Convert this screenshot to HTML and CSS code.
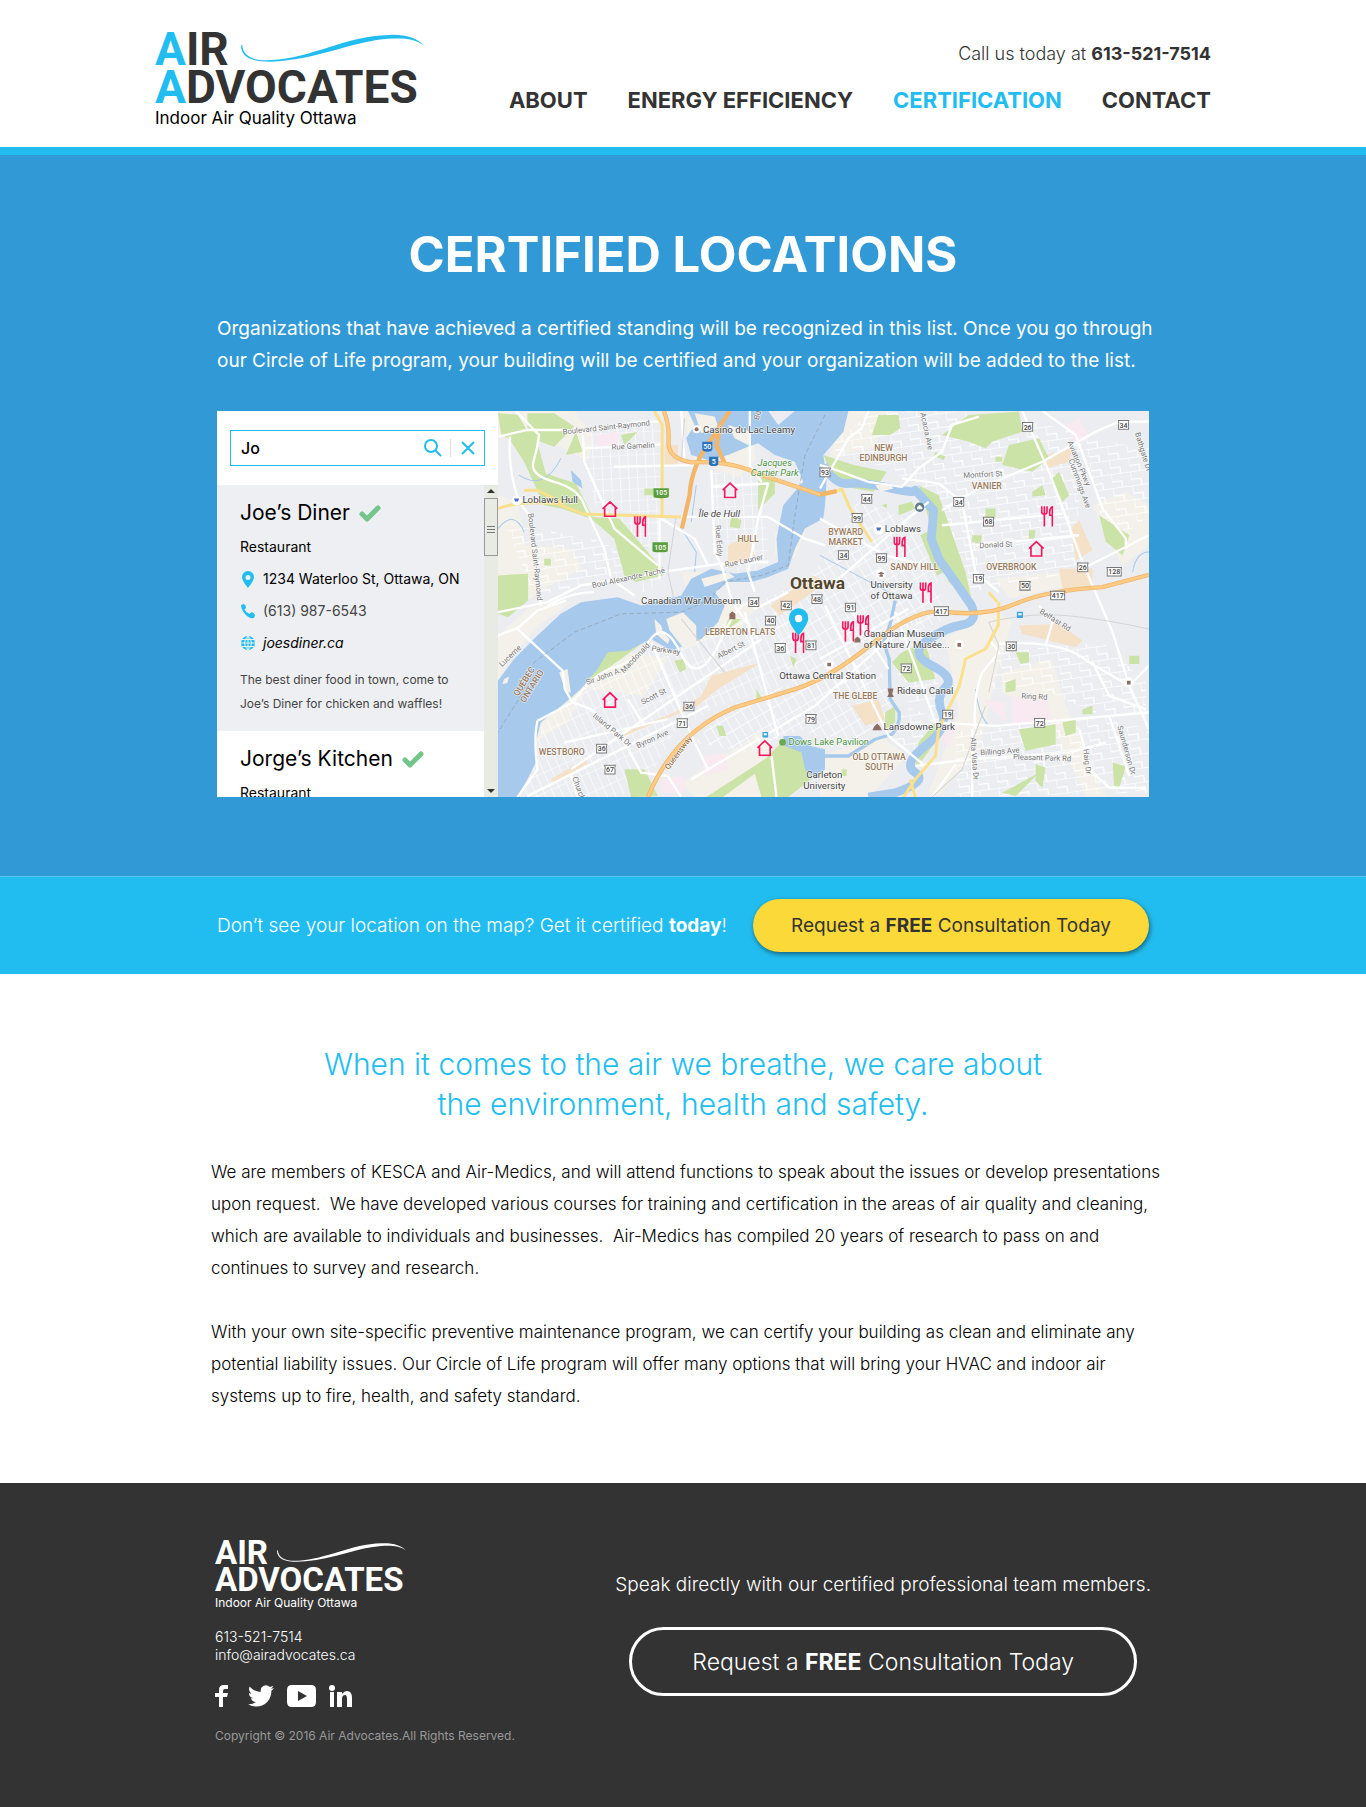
FILE: index.html
```html
<!DOCTYPE html>
<html lang="en">
<head>
<meta charset="utf-8">
<meta name="viewport" content="width=device-width, initial-scale=1">
<title>Certified Locations | Air Advocates</title>
<link rel="stylesheet" href="styles.css">
</head>
<body>
<svg class="sprite" aria-hidden="true">
  <symbol id="swoosh" viewBox="0 0 172 30" preserveAspectRatio="none"><path d="M1 12C2 26 14 29 28 28C66 26 98 3 138 2C152 1 165 5 171 13C163 6 152 5 138 6C108 8 76 25 38 29C18 31 0 29 0 13Z"/></symbol>
  <symbol id="check" viewBox="0 0 22 17"><path d="M3 9l5 5L19 3" fill="none" stroke="#74c58b" stroke-width="5" stroke-linecap="round" stroke-linejoin="round"/></symbol>
  <symbol id="house" viewBox="0 0 48 50"><path d="M2 25L24 4l22 21M8 20v27h32V20" fill="none" stroke="#f3195f" stroke-width="5"/></symbol>
  <symbol id="cutlery" viewBox="0 0 38 64"><path d="M3 1v16q0 8 8 8t8-8V1M11 1v61M35 62V3q-8 3-8 15v10h8" fill="none" stroke="#f3195f" stroke-width="5"/></symbol>
  <symbol id="shield" viewBox="0 0 36 32"><path d="M2 3h32q-3 7-1 14v12H3V17Q5 10 2 3z" fill="#fff" stroke="#777" stroke-width="3"/></symbol>
  <symbol id="shield-wide" viewBox="0 0 48 32"><path d="M2 3h44q-3 7-1 14v12H3V17Q5 10 2 3z" fill="#fff" stroke="#777" stroke-width="3"/></symbol>
</svg>

<header class="site-header">
  <div class="header-inner">
    <a class="logo" href="#">
      <span class="logo-row"><span><span class="accent">A</span>IR</span><svg class="swoosh" aria-hidden="true"><use href="#swoosh"/></svg></span>
      <span class="logo-row"><span><span class="accent">A</span>DVOCATES</span></span>
      <span class="tagline">Indoor Air Quality Ottawa</span>
    </a>
    <div class="header-right">
      <p class="phone">Call us today at <strong>613-521-7514</strong></p>
      <nav class="main-nav" aria-label="Main">
        <a href="#">ABOUT</a>
        <a href="#">ENERGY EFFICIENCY</a>
        <a href="#" class="current" aria-current="page">CERTIFICATION</a>
        <a href="#">CONTACT</a>
      </nav>
    </div>
  </div>
</header>

<main>
<section class="locations">
  <div class="container">
    <h1>CERTIFIED LOCATIONS</h1>
    <p class="intro">Organizations that have achieved a certified standing will be recognized in this list. Once you go through<br>our Circle of Life program, your building will be certified and your organization will be added to the list.</p>

    <div class="finder">
      <div class="sidebar">
        <form class="search" role="search">
          <input type="text" value="Jo" aria-label="Search locations">
          <button type="button" aria-label="Search"><svg width="18" height="18" viewBox="0 0 18 18"><circle cx="7" cy="7" r="6"/><path d="M11 11l6 6"/></svg></button>
          <button type="button" class="clear" aria-label="Clear"><svg width="14" height="14" viewBox="0 0 14 14"><path d="M1 1l12 12M13 1L1 13"/></svg></button>
        </form>
        <div class="results">
          <div class="result-list">
            <article class="result selected">
              <h2>Joe’s Diner <svg class="check" aria-label="Certified"><use href="#check"/></svg></h2>
              <p class="row">Restaurant</p>
              <p class="row"><svg class="row-icon" viewBox="0 0 16 18"><path d="M8 1a6 6 0 0 0-6 6c0 4 6 11 6 11s6-7 6-11a6 6 0 0 0-6-6zm0 4a2 2 0 1 1 0 5 2 2 0 0 1 0-5z" fill-rule="evenodd"/></svg>1234 Waterloo St, Ottawa, ON</p>
              <p class="row muted"><svg class="row-icon" viewBox="0 0 16 18"><path d="M1 3l3-1q2 1 2 4L4.500 7.500q1.500 3 5 4.500l2-2q3 1 3.500 3l-1 3q-5 1-9-4T1 3z"/></svg>(613) 987-6543</p>
              <p class="row"><svg class="row-icon" viewBox="0 0 16 18"><circle cx="8" cy="9" r="7"/><path d="M1 9h14M2 5.500h12M2 12.500h12M8 2v14M8 2q-7 7 0 14M8 2q7 7 0 14" fill="none" stroke="#edeff2" stroke-width="1"/></svg><a href="#">joesdiner.ca</a></p>
              <p class="blurb">The best diner food in town, come to<br>Joe’s Diner for chicken and waffles!</p>
            </article>
            <article class="result">
              <h2>Jorge’s Kitchen <svg class="check" aria-label="Certified"><use href="#check"/></svg></h2>
              <p class="row">Restaurant</p>
            </article>
          </div>
          <div class="scrollbar" aria-hidden="true">
            <span class="arrow up"></span>
            <span class="thumb"></span>
            <span class="arrow down"></span>
          </div>
        </div>
      </div>

      <svg class="map" viewBox="12 18 1947 1155" preserveAspectRatio="xMidYMid slice" role="img" aria-label="Map of certified locations in Ottawa">
        <defs>
          <pattern id="grid" width="26" height="34" patternUnits="userSpaceOnUse" patternTransform="rotate(-3)"><path d="M0 0H26M0 0V34" stroke="#fff" stroke-width="3.500"/></pattern>
          <pattern id="grid-tilt" width="26" height="40" patternUnits="userSpaceOnUse" patternTransform="rotate(-30)"><path d="M0 0H26M0 0V40" stroke="#fff" stroke-width="4"/></pattern>
          <pattern id="grid-west" width="24" height="56" patternUnits="userSpaceOnUse" patternTransform="rotate(-24)"><path d="M0 0H24M0 0V56" stroke="#fff" stroke-width="3.500"/></pattern>
          <pattern id="grid-loose" width="58" height="42" patternUnits="userSpaceOnUse" patternTransform="rotate(-8)"><path d="M0 0H58M0 0V24H30V42" fill="none" stroke="#fff" stroke-width="3.500"/></pattern>
        </defs>
        <path class="land" d="M0 0H1980V1190H0z"/>
        <g class="cream">
          <path d="M12 18h40l40 60-80 20zM12 270l60 20 20 130 140 10 30 60-110 60-60 40H12zM60 18h180l60 80-20 70-100-50-90-40zM560 18h220v150l-50 50-130-50zM1045 18h150l-60 110-130 30zM840 380l90 0-30 80-60-10zM560 500l90 0-20 70-40 30zM230 590l-110 80-60 80-48 70V690l100-90z"/>
          <path d="M700 590l100-5-70 90-170 50-60-30zM280 800l130-60 110 20-70 110-170-20zM130 960l80-90 80-40-70 120-100 60zM1350 700l140-90 60 40-40 130-60 250-120 140-30-10 90-240zM1520 800l150-40 40 140 120 270h-60l-120-250-130-60zM560 1130l250-160 40 80 10 123H600zM975 1050l180-60 80 60-110 120h-150zM1790 300l100-40 69 40v120l-80 60zM1500 520l200-20 60 30-220 50z"/>
        </g>
        <path fill="url(#grid)" d="M275 80L500 50l-5 280-190-20-30-150zM330 330l165 10v200l-50 20zM640 200l190 20-20 120 20 160-110 10-50-140z"/>
        <path fill="url(#grid-tilt)" d="M790 590l150-70 90-120 60-120 130 60 80 60 50 240-190 90-70 120-180 20z"/>
        <path fill="url(#grid-tilt)" d="M700 900l290-100 170 0 30 120-140 110-130-60-160 70-160-30z"/>
        <path fill="url(#grid-west)" d="M140 960l130-110 210-130 220-70 220-30-60 220-190 60-130 80-60 110-100 83H90z"/>
        <path fill="url(#grid-loose)" d="M1020 110l110-90h300l330 60-20 420-320 60-110-280-130-90-160-40zM1190 660l80-30 60 200 0 90-110-40zM1220 900l120 40-80 100-60-30zM1490 740l330-30 130 120v100l-160-10-170-80-130 10zM1380 980l430-50 150 40v190l-580 13zM1760 100l199 30v200l-120 100zM30 350l300 60 130 100-340 60z"/>
        <g class="built">
          <path d="M700 420l60-30 20 60-80 40zM510 120h40v60h-40zM825 600l130-90 40 20-140 100zM1570 660l120-5 70 50-20 20-160-40zM1725 370l25-25 40 90-50 30zM1690 490h100v60h-90zM1650 150l80-20-10 40-70 20zM1070 900l80-20 20 60-60 20zM390 980l150-60 80-50 30-60 150-40-130 80-60 50-220 90zM170 1120l100-60 10 12-100 60z"/>
        </g>
        <g class="campus">
          <path d="M310 90l60-10v45h-60zM1550 870l100 0 20 75-120 10zM1460 880l70 10 0 60zM620 1050l70-10 10 50-70 20zM500 1120l70-10v50h-70zM1340 990l50-50-30 90zM1710 60l40-20 30 60-40 20z"/>
        </g>
        <g class="green">
          <path d="M12 25l60 5 40 70-30 20-60-30zM45 100l80-5 30 110 90 30 50 100 80 5 110 130 20 40-80 20-35-20-30-110-70-60-90-30-50-10-60-130z"/>
          <path d="M100 25h80l60 40-60 60-80-30zM12 510l90-5v80l-60 50-30-10zM245 80l20 60-50 10zM790 220l50-5v50l-50 50zM710 330l30 15-5 25-30-5zM720 50l50-20v50z"/>
          <path d="M220 850l110-115 130-35-80 60-130 90-20 30zM175 765l40-15 5 40-40 5zM540 765l25-5 10 30-20 10zM700 640l40 0-50 40zM390 1090l60 0 40 80-80 3zM810 1060l60-60 60 0 30 110-80 63h-80l-20-70-100 73h-50z"/>
          <path d="M985 150l90 30 100 20-40 60-110-20zM1130 90l20-60h60l5 40-30 20zM1340 90l80-60 150-10 10 60-90 30-20 20-50-20zM1540 120l90-20 30 60-50 40-90-20zM1270 240l60 30 80 230 20 90-70-60-30-80-50-180zM1275 390l40-20 30 130-20 10z"/>
          <path d="M1690 200l30 70-20 20-30-70zM1810 330l90 60-20 60-50-40zM1210 300l40-10 10 20-50 20zM1470 310h30v25l-30 5zM1430 390h30l-5 25-25-5zM1610 260l30-20 10 30-40 5zM1220 740l70-30 30 110-80 10-50-60zM1270 1010l50-60 0 60-60 80zM1530 830l30-10v35l-30 5zM1560 740l40 0v30l-25 5zM1570 970l110-15 0 60-90 20zM1700 950l40-10v40l-30 10zM1520 1160l110-60-70 70zM1620 1075l30 10-10 60-20-20zM1760 910l30-10v25h-30zM1850 1070l40 10-20 65-15-5zM1900 750l30 0v25h-30z"/>
          <path d="M1170 920l30-20 0 50-30 20zM685 960l10 30-20 0-10-30zM885 750l20 10-10 25zM785 850l15 25-15 5zM380 90l50-10-40 40zM450 250h30v20h-30zM150 460h20v20h-20zM1040 1090h15v20h-15zM1160 300l15-5v15zM1500 155h20v15h-20zM1600 375h20l-5 30-15-5zM1320 140l30 15-5 10-30-12z"/>
        </g>
        <g class="water">
          <path d="M12 825L60 760L130 690L200 625L260 590L370 575L440 600L480 590L560 570L590 520L650 490L720 505L790 495L850 470L845 400L865 300L925 230L900 170L840 150L790 115L760 125L700 150L640 165L590 150L575 100L600 60L580 18H820L850 60L900 18H1060L1045 80L985 150L995 220L990 300L985 340L930 370L900 430L880 490L820 515L770 530L700 530L660 560L690 600L670 650L620 700L530 735L470 700L400 735L340 740L310 790L260 850L220 885L140 950L125 1010L130 1060L100 1120L70 1173H12z"/>
          <path d="M865 990l50 0 30 30 45 10v60l-30 30-30-30-10-50-50-20zM230 195l30 30 5 25-30-20z"/>
        </g>
        <g class="river">
          <path stroke-width="26" d="M985 180Q1020 240 1060 235T1180 248T1260 255L1315 315L1308 400L1330 460L1380 530L1428 600Q1450 650 1400 658T1295 705T1310 780T1350 845T1340 920T1290 1020T1260 1100T1200 1160L1120 1173"/>
          <path stroke-width="10" d="M1200 585L1185 655L1165 710L1182 760L1185 880L1212 920Q1215 960 1190 985L1140 1000L1060 1050H960"/>
          <path stroke-width="3" d="M75 210Q150 260 200 160M590 350L605 240M560 370L605 440L600 500M12 370Q60 310 90 380M975 450L1180 560M1440 850Q1450 930 1480 960M1910 500Q1920 440 1959 440"/>
        </g>
        <g class="cream"><path d="M480 640l20 20 5 20 20 20-5 15-35-30zM515 640l50-20 40 40 0 60-40 5-40-50zM600 25l60 10 10 30-50 20zM700 60l70 20-10 40-40-20zM1140 240l40-5 15 15-40 10zM195 800l25-10 10 70-15 0zM30 820l15-8-5 20-15 3zM620 520l80-20 20 15-90 30z"/></g>
        <g class="road">
          <path d="M65 18L135 90Q130 130 118 170T180 230T270 300L330 430L350 520L420 570M12 95L100 75L205 75L265 80L430 50H500M48 95Q40 190 75 290L105 330L140 600M265 80L270 170L360 370L490 480M270 130L500 118M360 185L600 180M495 340V520M12 620L160 590L260 540L500 500L680 475L820 470M160 600Q230 560 300 560M500 340L600 400L640 480M560 335H820L930 400L990 420M650 195L660 440L680 480L710 580M650 245L820 235L790 340L760 500L780 560M765 18V180L800 230M560 18L570 170"/>
          <path d="M12 690L75 665L130 615L215 585M70 670L205 795L212 850L235 890L290 910L390 1010L440 1100L520 1110L560 1173M130 945Q118 1000 130 1090L70 1173M235 890L130 945M235 890Q300 800 360 785T465 705T560 745T680 700T780 610L880 560M230 1090L800 700M210 1010L520 940M100 1170L640 900M470 710L600 1010L640 1090M590 1120L960 900L1180 700M750 620L850 990M830 1050L845 1173M400 880L450 960M230 1110L250 1173M720 600L790 700M990 600L1180 990L1290 1080"/>
          <path d="M975 250L1060 100L1100 70L1120 18M975 180L1010 190L1120 230L1220 245L1270 190L1340 140L1370 60L1450 35M1220 220L1330 235L1400 290L1440 500L1510 560M1340 315L1450 250L1640 170L1800 80L1870 50H1959M1580 18L1660 200L1760 470L1850 680L1900 840L1959 970M1640 18L1740 90L1780 200L1820 310L1890 400L1890 430M1760 490L1959 390M1340 360L1700 325M1440 420L1750 390M975 340L1170 450L1290 480M1020 530L1250 330L1300 290M1200 620L1260 780L1320 950L1500 960L1959 920M1440 970Q1430 880 1460 800L1510 740L1480 700M1510 715Q1700 700 1780 770L1900 840L1959 780M1430 970V1173M1260 1080L1420 1060L1720 1040L1830 1010M1750 970L1790 1100L1840 1145H1950M1840 930L1900 1110M1310 1175L1380 1075M1650 720L1670 650L1630 600M1790 770L1840 870L1950 910M1060 600L1180 790M975 760L1240 610"/>
        </g>
        <g class="rail"><path d="M545 330L520 500L540 590M570 40L560 170M1470 900L1400 1090L1310 1173M1480 860L1510 720L1480 650Q1600 620 1710 630T1959 670M560 640L690 800"/></g>
        <path class="border" d="M990 30L930 150L900 330L880 480L800 510L690 530L640 585L560 620L380 625L240 680L120 770L80 870L12 980"/>
        <g class="yellow-road">
          <path d="M480 18L503 60V330M12 310Q80 285 190 296L265 326L560 335M210 296L130 255H90M990 270L1040 252L1065 310L1130 410M1510 590L1508 660L1470 730L1410 760L1392 840L1330 970L1320 1050L1260 1120L1225 1173M1480 560L1505 590M1245 1120L1260 1173"/>
        </g>
        <g class="highway">
          <path d="M508 18Q525 60 522 110T590 172Q710 165 800 210L975 268L1025 258M705 18L655 95Q590 180 585 270L562 370M680 50L665 120L690 175M460 1173Q540 980 720 905L900 850Q1000 820 1130 715T1340 618Q1470 635 1560 595T1820 545L1959 508"/>
        </g>
        <g class="highway-core">
          <path d="M508 18Q525 60 522 110T590 172Q710 165 800 210L975 268M460 1173Q540 980 720 905L900 850Q1000 820 1130 715T1340 618Q1470 635 1560 595T1820 545L1959 508"/>
        </g>

        <g class="street">
          <text transform="rotate(-6 335 70)" x="205" y="75">Boulevard Saint-Raymond</text>
          <text transform="rotate(-3 415 130)" x="352" y="131">Rue Gamelin</text>
          <text transform="translate(102 325) rotate(84)">Boulevard Saint-Raymond</text>
          <text transform="rotate(-12 295 548)" x="295" y="548">Boul Alexandre-Taché</text>
          <text transform="translate(662 360) rotate(86)">Rue Eddy</text>
          <text transform="rotate(-12 692 486)" x="692" y="486">Rue Laurier</text>
          <text transform="translate(792 46) rotate(-75)">Bd</text>
          <text transform="translate(24 785) rotate(-44)">Lucerne</text>
          <text transform="translate(278 838) rotate(-20)">Sir John A.</text>
          <text transform="translate(388 803) rotate(-46)">Macdonald</text>
          <text transform="translate(470 735) rotate(8)">Parkway</text>
          <text transform="translate(445 897) rotate(-27)">Scott St</text>
          <text transform="translate(294 932) rotate(40)">Island Park Dr</text>
          <text transform="translate(430 1027) rotate(-24)">Byron Ave</text>
          <text transform="translate(672 759) rotate(-26)">Albert St</text>
          <text transform="translate(234 1115) rotate(70)">Church</text>
          <text class="queensway" transform="translate(522 1092) rotate(-53)">Queensway</text>
          <text transform="translate(1275 25) rotate(78)">Acacia Ave</text>
          <text transform="rotate(-3 1404 218)" x="1404" y="219">Montfort St</text>
          <text transform="rotate(-3 1452 428)" x="1452" y="429">Donald St</text>
          <text transform="translate(1715 112) rotate(67)">Aviation Pkwy</text>
          <text transform="translate(1718 165) rotate(70)">Cummings Ave</text>
          <text transform="translate(1917 85) rotate(73)">Bathgate Dr</text>
          <text transform="translate(1630 622) rotate(32)">Belfast Rd</text>
          <text transform="translate(1577 878) rotate(3)">Ring Rd</text>
          <text transform="translate(1425 995) rotate(86)">Alta Vista Dr</text>
          <text transform="translate(1455 1048) rotate(-4)">Billings Ave</text>
          <text transform="translate(1552 1060) rotate(2)">Pleasant Park Rd</text>
          <text transform="translate(1762 1030) rotate(83)">Haig Dr</text>
          <text transform="translate(1864 962) rotate(74)">Saunderson Dr</text>
        </g>
        <g class="area">
          <text x="728" y="409">HULL</text>
          <text x="1165" y="139" text-anchor="middle">NEW</text>
          <text x="1165" y="169" text-anchor="middle">EDINBURGH</text>
          <text x="1429" y="251">VANIER</text>
          <text x="1052" y="390" text-anchor="middle">BYWARD</text>
          <text x="1052" y="420" text-anchor="middle">MARKET</text>
          <text x="1185" y="494">SANDY HILL</text>
          <text x="1472" y="495">OVERBROOK</text>
          <text x="631" y="687">LEBRETON FLATS</text>
          <text x="134" y="1047">WESTBORO</text>
          <text x="1014" y="880">THE GLEBE</text>
          <text x="1152" y="1062" text-anchor="middle">OLD OTTAWA</text>
          <text x="1152" y="1092" text-anchor="middle">SOUTH</text>
          <text transform="translate(72 873) rotate(-58)">QUÉBEC</text>
          <text transform="translate(92 892) rotate(-58)">ONTARIO</text>
        </g>
        <g class="place">
          <circle cx="606" cy="73" r="12" fill="#fff"/><circle cx="606" cy="73" r="6" fill="#8d6e63"/><text x="625" y="83">Casino du Lac Leamy</text>
          <circle cx="68" cy="286" r="15" fill="#fff"/><path d="M60 280h15l-3 9H63z" fill="#4a6fc4"/><text x="85" y="294">Loblaws Hull</text>
          <text class="italic" x="612" y="336">Île de Hull</text>
          <text x="440" y="595">Canadian War Museum</text>
          <circle cx="1151" cy="373" r="15" fill="#fff"/><path d="M1143 367h15l-3 9h-9z" fill="#4a6fc4"/><text x="1169" y="381">Loblaws</text>
          <circle cx="1158" cy="506" r="15" fill="#fff"/><path d="M1148 504l10-5 10 5-10 5zM1153 509h10v5h-10z" fill="#8d6e63"/>
          <text x="1189" y="549" text-anchor="middle">University</text>
          <text x="1189" y="581" text-anchor="middle">of Ottawa</text>
          <circle cx="1273" cy="306" r="14" fill="#607d8b"/><path d="M1265 306l8-7 8 7v6h-16z" fill="#fff"/>
          <path d="M704 625l9-7 9 7v16h-18zM1078 700l9-7 9 7v11h-18zM1177 848h18l-4 16 5 10h-20l5-10zM1137 962l9-9 9 9 5 11h-28z" fill="#8d6e63"/>
          <text x="1106" y="694">Canadian Museum</text>
          <text x="1106" y="726">of Nature / Musée...</text>
          <circle cx="1391" cy="717" r="14" fill="#fff"/><circle cx="1002" cy="777" r="14" fill="#fff"/><circle cx="1898" cy="830" r="15" fill="#fff"/>
          <path d="M1386 712h11v11h-11zM997 771h11v11h-11zM1893 825h11v11h-11z" fill="#8d6e63"/>
          <text x="853" y="820">Ottawa Central Station</text>
          <text x="1205" y="865">Rideau Canal</text>
          <text x="1165" y="972">Lansdowne Park</text>
          <text x="988" y="1117" text-anchor="middle">Carleton</text>
          <text x="988" y="1149" text-anchor="middle">University</text>
          <text class="park italic" x="788" y="182">Jacques</text>
          <text class="park italic" x="768" y="214">Cartier Park</text>
          <circle cx="863" cy="1009" r="10" fill="#6ba84f"/><text class="park" x="881" y="1017">Dows Lake Pavilion</text>
          <path d="M803 978h17v17h-17zM1564 619h18v18h-18z" fill="#39a5e0"/><path d="M807 982h9v6h-9zM1568 623h10v6h-10z" fill="#fff"/>
        </g>
        <text class="city" x="885" y="551">Ottawa</text>

        <g class="route">
          <path d="M623 110h30v22q0 8-15 8t-15-8zM643 155h28v20q0 8-14 8t-14-8z" fill="#2b74bc"/>
          <path d="M477 249h46v25q0 5-23 5t-23-5zM474 411h46v25q0 5-23 5t-23-5z" fill="#5a9e3c"/>
          <g class="light"><text x="638" y="133">50</text><text x="657" y="177">5</text><text x="500" y="271">105</text><text x="497" y="433">105</text></g>
          <use href="#shield" x="972" y="186" width="36" height="32"/><text x="990" y="210">93</text>
          <use href="#shield" x="1097" y="265" width="36" height="32"/><text x="1115" y="289">44</text>
          <use href="#shield" x="1068" y="322" width="36" height="32"/><text x="1086" y="346">99</text>
          <use href="#shield" x="1141" y="442" width="36" height="32"/><text x="1159" y="466">99</text>
          <use href="#shield" x="1027" y="433" width="36" height="32"/><text x="1045" y="457">34</text>
          <use href="#shield" x="1372" y="274" width="36" height="32"/><text x="1390" y="298">34</text>
          <use href="#shield" x="1578" y="50" width="36" height="32"/><text x="1596" y="74">26</text>
          <use href="#shield" x="1865" y="44" width="36" height="32"/><text x="1883" y="68">34</text>
          <use href="#shield" x="1461" y="333" width="36" height="32"/><text x="1479" y="357">68</text>
          <use href="#shield" x="1743" y="470" width="36" height="32"/><text x="1761" y="494">26</text>
          <use href="#shield-wide" x="1831" y="483" width="48" height="32"/><text x="1855" y="507">128</text>
          <use href="#shield" x="1431" y="504" width="36" height="32"/><text x="1449" y="528">19</text>
          <use href="#shield" x="1570" y="525" width="36" height="32"/><text x="1588" y="549">50</text>
          <use href="#shield-wide" x="1662" y="554" width="48" height="32"/><text x="1686" y="578">417</text>
          <use href="#shield-wide" x="1314" y="601" width="48" height="32"/><text x="1338" y="625">417</text>
          <use href="#shield" x="948" y="565" width="36" height="32"/><text x="966" y="589">48</text>
          <use href="#shield" x="759" y="574" width="36" height="32"/><text x="777" y="598">34</text>
          <use href="#shield" x="856" y="584" width="36" height="32"/><text x="874" y="608">42</text>
          <use href="#shield" x="809" y="629" width="36" height="32"/><text x="827" y="653">40</text>
          <use href="#shield" x="1048" y="590" width="36" height="32"/><text x="1066" y="614">91</text>
          <use href="#shield" x="838" y="711" width="36" height="32"/><text x="856" y="735">36</text>
          <use href="#shield" x="930" y="703" width="36" height="32"/><text x="948" y="727">81</text>
          <use href="#shield" x="565" y="886" width="36" height="32"/><text x="583" y="910">36</text>
          <use href="#shield" x="545" y="936" width="36" height="32"/><text x="563" y="960">71</text>
          <use href="#shield" x="304" y="1012" width="36" height="32"/><text x="322" y="1036">36</text>
          <use href="#shield" x="329" y="1075" width="36" height="32"/><text x="347" y="1099">67</text>
          <use href="#shield" x="930" y="923" width="36" height="32"/><text x="948" y="947">79</text>
          <use href="#shield" x="1215" y="772" width="36" height="32"/><text x="1233" y="796">72</text>
          <use href="#shield" x="1339" y="910" width="36" height="32"/><text x="1357" y="934">19</text>
          <use href="#shield" x="1529" y="706" width="36" height="32"/><text x="1547" y="730">30</text>
          <use href="#shield" x="1614" y="935" width="36" height="32"/><text x="1632" y="959">72</text>
        </g>

        <use href="#house" x="323" y="286" width="48" height="50"/>
        <use href="#house" x="682" y="230" width="48" height="50"/>
        <use href="#house" x="1598" y="405" width="48" height="50"/>
        <use href="#house" x="323" y="857" width="48" height="50"/>
        <use href="#house" x="786" y="1001" width="48" height="50"/>
        <use href="#cutlery" x="418" y="332" width="38" height="64"/>
        <use href="#cutlery" x="891" y="680" width="38" height="64"/>
        <use href="#cutlery" x="1635" y="302" width="38" height="64"/>
        <use href="#cutlery" x="1194" y="393" width="38" height="64"/>
        <use href="#cutlery" x="1272" y="530" width="38" height="64"/>
        <use href="#cutlery" x="1040" y="646" width="38" height="64"/>
        <use href="#cutlery" x="1085" y="628" width="38" height="64"/>
        <path d="M911 608a29 29 0 0 0-29 29c0 20 29 52 29 52s29-32 29-52a29 29 0 0 0-29-29z" fill="#22bdf0"/><circle cx="911" cy="639" r="11" fill="#fff"/>
      </svg>
    </div>
  </div>
</section>

<section class="cta-band">
  <div class="container">
    <p>Don’t see your location on the map? Get it certified <strong>today</strong>!</p>
    <button type="button" class="cta">Request a <strong>FREE</strong> Consultation Today</button>
  </div>
</section>

<section class="about">
  <h2>When it comes to the air we breathe, we care about<br>the environment, health and safety.</h2>
  <p>We are members of KESCA and Air-Medics, and will attend functions to speak about the issues or develop presentations<br>upon request.&nbsp; We have developed various courses for training and certification in the areas of air quality and cleaning,<br>which are available to individuals and businesses.&nbsp; Air-Medics has compiled 20 years of research to pass on and<br>continues to survey and research.</p>
  <p>With your own site-specific preventive maintenance program, we can certify your building as clean and eliminate any<br>potential liability issues. Our Circle of Life program will offer many options that will bring your HVAC and indoor air<br>systems up to fire, health, and safety standard.</p>
</section>
</main>

<footer class="site-footer">
  <div class="footer-inner">
    <div class="footer-left">
      <a class="logo small" href="#">
        <span class="logo-row"><span>AIR</span><svg class="swoosh" aria-hidden="true"><use href="#swoosh"/></svg></span>
        <span class="logo-row"><span>ADVOCATES</span></span>
        <span class="tagline">Indoor Air Quality Ottawa</span>
      </a>
      <address>613-521-7514<br><a href="#">info@airadvocates.ca</a></address>
      <nav class="social" aria-label="Social">
        <a href="#" aria-label="Facebook"><svg width="20" height="22" viewBox="0 0 20 22"><path d="M4 22V12H0V8h4V5q0-5 5-5h4v4h-3q-2 0-2 2v2h5l-1 4H8v10z"/></svg></a>
        <a href="#" aria-label="Twitter"><svg width="26" height="22" viewBox="0 2 24 20"><path d="M23.954 4.569a10 10 0 01-2.825.775 4.958 4.958 0 002.163-2.723c-.951.555-2.005.959-3.127 1.184a4.92 4.92 0 00-8.384 4.482C7.691 8.094 4.066 6.13 1.64 3.161a4.822 4.822 0 00-.666 2.475c0 1.71.87 3.213 2.188 4.096a4.904 4.904 0 01-2.228-.616v.061a4.923 4.923 0 003.946 4.827 4.996 4.996 0 01-2.212.085 4.937 4.937 0 004.604 3.417 9.868 9.868 0 01-6.102 2.105c-.39 0-.779-.023-1.17-.067a13.995 13.995 0 007.557 2.209c9.054 0 13.999-7.496 13.999-13.986 0-.209 0-.42-.015-.63a9.936 9.936 0 002.46-2.548z"/></svg></a>
        <a href="#" aria-label="YouTube"><svg width="29" height="22" viewBox="0 0 29 22"><path fill-rule="evenodd" d="M5 0h19q5 0 5 5v12q0 5-5 5H5q-5 0-5-5V5q0-5 5-5zm6 6v10l9-5z"/></svg></a>
        <a href="#" aria-label="LinkedIn"><svg width="23" height="22" viewBox="0 0 23 22"><circle cx="3" cy="3" r="3"/><path d="M1 7h4v15H1zM8 7h5v2q2-3 5-3 5 0 5 7v9h-5v-8q0-4-2-4-3 0-3 4v8H8z"/></svg></a>
      </nav>
      <p class="copyright">Copyright © 2016 Air Advocates.All Rights Reserved.</p>
    </div>
    <div class="footer-right">
      <p>Speak directly with our certified professional team members.</p>
      <button type="button" class="cta-outline">Request a <strong>FREE</strong> Consultation Today</button>
    </div>
  </div>
</footer>
</body>
</html>
```
FILE: styles.css
```css
* { box-sizing: border-box; }
body { margin: 0; background: #fff; color: #000; font-family: Inter, "Open Sans", sans-serif; font-size: 16px; }
h1, h2, p { margin: 0; }
a { color: inherit; text-decoration: none; }
button, input { font: inherit; color: inherit; }
button { cursor: pointer; }
.sprite { display: none; }
.container { max-width: 932px; margin: 0 auto; }

/* Header */
.site-header { border-bottom: 8px solid #22bdf0; }
.header-inner { max-width: 1056px; min-height: 147px; margin: 0 auto; display: flex; justify-content: space-between; align-items: flex-start; padding-top: 30px; }
.logo { display: block; color: #333; font-family: Roboto, Inter, sans-serif; font-weight: 700; font-size: 46px; line-height: 38px; }
.logo-row { display: flex; align-items: flex-start; gap: 12px; }
.accent { color: #22bdf0; }
.swoosh { width: 184px; height: 29px; margin-top: 3px; fill: #22bdf0; }
.tagline { display: block; font-family: Inter, sans-serif; font-weight: 400; color: #000; font-size: 17px; line-height: 24px; }
.header-right { padding-top: 11px; text-align: right; color: #333; }
.phone { font-size: 18px; line-height: 26px; font-weight: 300; }
.phone strong { font-weight: 700; }
.main-nav { display: flex; gap: 40px; margin-top: 20px; font-size: 22px; line-height: 26px; font-weight: 700; }
.main-nav .current { color: #22bdf0; }

/* Certified locations */
.locations { background: #3099d6; color: #fff; padding: 71px 0 79px; }
.locations h1 { font-size: 49px; line-height: 58px; font-weight: 700; text-align: center; }
.intro { margin-top: 29px; font-size: 19px; line-height: 32px; font-weight: 400; white-space: nowrap; }
.finder { display: flex; height: 386px; margin-top: 34px; color: #000; background: #fff; }
.sidebar { flex: 0 0 281px; min-width: 0; display: flex; flex-direction: column; }
.search { display: flex; align-items: center; height: 36px; margin: 19px 13px; border: 1px solid #22bdf0; }
.search input { flex: 1; width: 0; min-width: 0; height: 32px; border: 0; padding: 0 10px; background: none; outline: 0; font-weight: 500; font-size: 16px; }
.search button { display: flex; align-items: center; justify-content: center; width: 34px; height: 18px; border: 0; padding: 0; background: none; }
.search .clear { border-left: 1px solid #e3e3e3; }
.search svg { fill: none; stroke: #22bdf0; stroke-width: 2; }
.results { flex: 1; min-height: 0; display: flex; }
.result-list { flex: 1; min-width: 0; overflow: hidden; }
.result { padding: 14px 0 15px 23px; }
.result.selected { background: #edeff2; }
.result h2 { display: flex; align-items: center; gap: 9px; margin-bottom: 4px; font-size: 21px; line-height: 28px; font-weight: 400; }
.check { width: 22px; height: 17px; }
.row { display: flex; align-items: center; font-size: 14px; line-height: 32px; white-space: nowrap; }
.row a { font-style: italic; }
.row-icon { width: 16px; height: 18px; margin-right: 7px; fill: #22bdf0; }
.muted, .blurb { color: #444; }
.blurb { margin-top: 9px; font-size: 12px; line-height: 24px; white-space: nowrap; }
.scrollbar { flex: 0 0 14px; display: flex; flex-direction: column; align-items: center; background: #e8eae4; padding: 4px 0; }
.arrow { border: 4px solid transparent; }
.arrow.up { border-top: 0; border-bottom-color: #333; }
.arrow.down { border-bottom: 0; border-top-color: #333; margin-top: auto; }
.thumb { width: 14px; height: 58px; margin-top: 5px; border: 1px solid #999; background: linear-gradient(#777 0 1px, transparent 1px 3px, #777 3px 4px, transparent 4px 6px, #777 6px 7px, transparent 7px) center 27px / 8px 8px no-repeat; }

/* Map */
.map { flex: 1; min-width: 0; height: 100%; display: block; font-family: Roboto, sans-serif; }
.map .land { fill: #ebedf1; }
.map .cream { fill: #f3f1e9; }
.map .built { fill: #f4e1c8; }
.map .campus { fill: #f9e9f0; }
.map .green { fill: #cbe3a6; }
.map .water { fill: #a7c9eb; }
.map .river { fill: none; stroke: #a7c9eb; stroke-linejoin: round; }
.map .road { fill: none; stroke: #fff; stroke-width: 7; stroke-linejoin: round; }
.map .rail { fill: none; stroke: #d4d4d4; stroke-width: 3; }
.map .border { fill: none; stroke: #8f9aa8; stroke-width: 2; stroke-dasharray: 14 8; }
.map .yellow-road { fill: none; stroke: #fae08c; stroke-width: 9; stroke-linejoin: round; }
.map .highway { fill: none; stroke: #f3b568; stroke-width: 13; }
.map .highway-core { fill: none; stroke: #fecb84; stroke-width: 8; }
.map text { paint-order: stroke; stroke: #fff; stroke-opacity: .75; stroke-width: 4px; stroke-linejoin: round; }
.street { font-size: 23px; fill: #767676; }
.street .queensway { fill: #8a5a24; }
.area { font-size: 26px; font-weight: 500; fill: #99795a; }
.place { font-size: 29px; fill: #444; }
.place .park { fill: #4a9440; font-size: 28px; }
.italic { font-style: italic; }
.city { font-size: 52px; font-weight: 700; fill: #54462d; }
.route { font-size: 21px; font-weight: 500; fill: #444; text-anchor: middle; }
.route .light { fill: #fff; }
.route .light text { stroke: none; }

/* Call to action */
.cta-band { background: #22bdf0; border-top: 1px solid #5fc4f0; color: #fff; }
.cta-band .container { display: flex; justify-content: space-between; align-items: center; min-height: 97px; }
.cta-band p { font-size: 19px; line-height: 26px; font-weight: 300; }
.cta-band strong, .cta-outline strong { font-weight: 700; }
.cta { width: 396px; height: 53px; border: 0; border-radius: 27px; background: #fbd938; color: #333; font-size: 19px; font-weight: 400; box-shadow: 1px 2px 5px rgba(0, 0, 0, .5); }

/* About */
.about { max-width: 944px; margin: 0 auto; padding: 70px 0 71px; }
.about h2 { margin-bottom: 32px; color: #22bdf0; font-size: 30px; line-height: 40px; font-weight: 300; text-align: center; }
.about p { font-size: 17px; line-height: 32px; font-weight: 300; white-space: nowrap; }
.about p + p { margin-top: 32px; }

/* Footer */
.site-footer { background: #333; color: #fff; }
.footer-inner { max-width: 936px; min-height: 324px; margin: 0 auto; padding: 56px 0 60px; display: flex; justify-content: space-between; }
.logo.small { color: #fff; font-size: 33px; line-height: 27px; }
.small .logo-row { gap: 9px; }
.small .swoosh { width: 130px; height: 20px; margin-top: 3px; fill: #fff; }
.small .tagline { color: #fff; font-size: 12px; line-height: 20px; }
address { margin-top: 15px; font-style: normal; font-weight: 300; font-size: 14px; line-height: 18px; }
.social { display: flex; align-items: center; gap: 13px; margin-top: 21px; }
.social svg { display: block; fill: #fff; }
.copyright { margin-top: 19px; color: #999; font-size: 12px; line-height: 20px; }
.footer-right { display: flex; flex-direction: column; align-items: center; padding-top: 33px; }
.footer-right p { font-size: 19px; line-height: 26px; font-weight: 300; }
.cta-outline { width: 508px; height: 69px; margin-top: 29px; border: 3px solid #fff; border-radius: 35px; background: none; color: #fff; font-size: 23px; font-weight: 300; }
```
